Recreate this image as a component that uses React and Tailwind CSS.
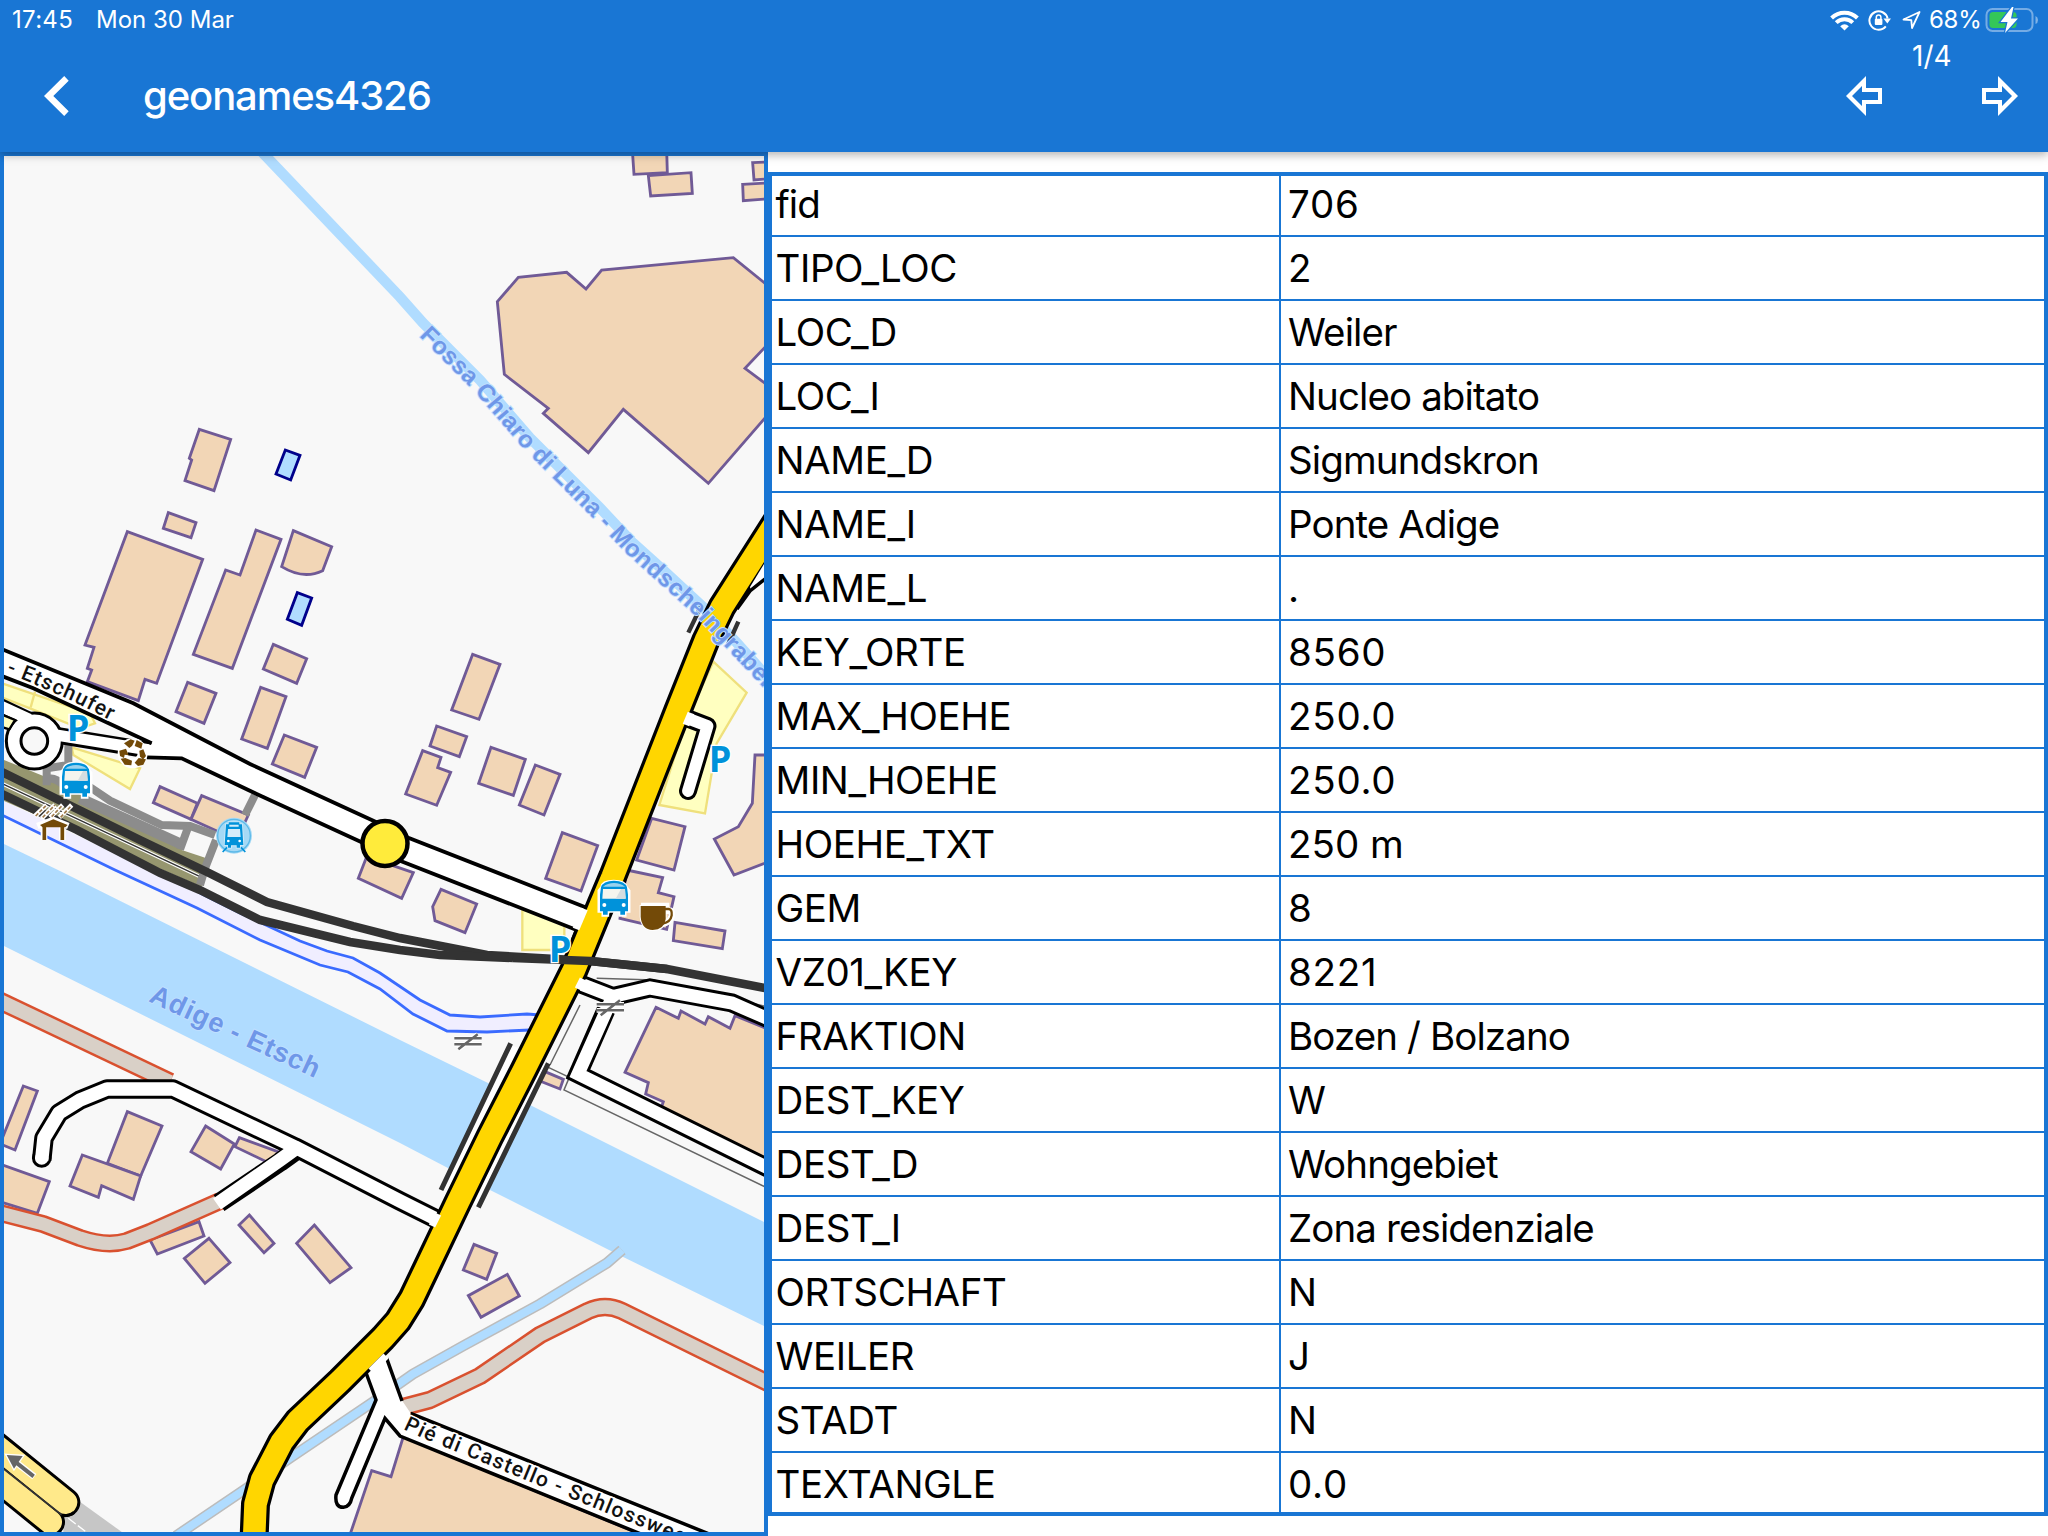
import React from "react";

const ROWS = [
  ["fid", "706"],
  ["TIPO_LOC", "2"],
  ["LOC_D", "Weiler"],
  ["LOC_I", "Nucleo abitato"],
  ["NAME_D", "Sigmundskron"],
  ["NAME_I", "Ponte Adige"],
  ["NAME_L", "."],
  ["KEY_ORTE", "8560"],
  ["MAX_HOEHE", "250.0"],
  ["MIN_HOEHE", "250.0"],
  ["HOEHE_TXT", "250 m"],
  ["GEM", "8"],
  ["VZ01_KEY", "8221"],
  ["FRAKTION", "Bozen / Bolzano"],
  ["DEST_KEY", "W"],
  ["DEST_D", "Wohngebiet"],
  ["DEST_I", "Zona residenziale"],
  ["ORTSCHAFT", "N"],
  ["WEILER", "J"],
  ["STADT", "N"],
  ["TEXTANGLE", "0.0"],
];

/* Map tiles: geometry is given in thirds of a pixel relative to each tile's origin. */
const TILES = {
  nw: "translate(0 150) scale(.33333)",
  ne: "translate(380 150) scale(.33333)",
  w: "translate(0 510) scale(.33333)",
  e: "translate(380 510) scale(.33333)",
  sw: "translate(0 870) scale(.33333)",
  se: "translate(380 870) scale(.33333)",
  bw: "translate(0 1200) scale(.33333)",
  be: "translate(380 1200) scale(.33333)",
};

const BUILDINGS = {
  nw: [
    "M598 838L692 868L642 1022L555 992L575 930L568 925Z",
    "M505 1088L588 1118L573 1163L490 1135Z",
  ],
  ne: [
    "M352 455L415 382L560 367L618 417L665 360L1060 323L1180 420V565L1095 655L1180 718V775L985 1000L730 778L625 908L490 790L505 775L373 673Z",
    "M757 0H860L862 68L762 73Z",
    "M805 77L933 68L937 130L812 138Z",
    "M1118 38L1180 35V85L1122 90Z",
    "M1088 103L1180 98V145L1090 152Z",
  ],
  w: [
    "M382 65L608 148L470 520L435 508L415 572L262 515L275 480L262 475L282 412L255 405Z",
    "M768 60L843 88L697 475L580 433L677 180L720 195Z",
    "M880 62L995 110L968 182Q910 210 845 170Z",
    "M820 403L920 446L890 520L790 477Z",
    "M563 517L648 550L612 640L528 605Z",
    "M782 532L858 560L802 715L725 687Z",
    "M853 675L950 712L914 802L817 762Z",
    "M480 830L592 880L573 928L460 878Z",
    "M605 857L745 915L710 990L573 928Z",
    "M1100 1040L1240 1088L1205 1165L1075 1105Z",
  ],
  e: [
    "M278 433L360 463L297 628L215 600Z",
    "M170 648L260 680L238 740L150 708Z",
    "M128 722L183 742L173 773L212 787L170 886L77 852Z",
    "M333 712L436 748L400 856L296 820Z",
    "M466 765L540 793L492 915L418 885Z",
    "M547 968L653 1007L603 1143L497 1105Z",
    "M815 925L915 950L882 1080L770 1050Z",
    "M1125 735H1180V1050L1062 1095L1003 987L1075 950L1117 880Z",
    "M740 1080L848 1103L835 1148L882 1160L860 1258L720 1225Z",
  ],
  sw: [
    "M70 648L112 663L45 840L0 822Z",
    "M0 882L148 935L112 1030L0 995Z",
    "M382 725L486 768L422 918L322 880Z",
    "M247 855L422 918L400 988L305 947L295 982L210 948Z",
    "M617 768L703 822L662 897L573 845Z",
    "M718 803L860 855L830 890L705 830Z",
    "M450 1110L597 1055L612 1098L472 1152Z",
  ],
  se: [
    "M183 58L290 102L255 188L165 152L158 110Z",
    "M885 157L1035 183L1027 236L880 212Z",
    "M828 412L895 445L903 423L975 462L985 440L1050 475L1065 437L1170 480V890L845 710L850 695L797 672L805 638L735 607Z",
    "M495 605L550 628L540 657L480 633Z",
  ],
  bw: [
    "M627 115L690 188L615 250L553 175Z",
    "M748 45L822 130L792 158L717 75Z",
    "M943 75L1053 203L990 248L890 130Z",
  ],
  be: [
    "M282 133L350 160L320 238L250 210Z",
    "M382 223L418 288L303 352L265 287Z",
    "M-25 812L33 830L70 710L800 1010L-92 1010Z",
  ],
};

function Road({ d, outer, inner, edge = "#000", fill = "#fff", cap = "butt" }) {
  return (
    <g fill="none" strokeLinejoin="round" strokeLinecap={cap}>
      <path d={d} stroke={edge} strokeWidth={outer} />
      <path d={d} stroke={fill} strokeWidth={inner} />
    </g>
  );
}

function Bus() {
  return (
    <g>
      <path d="M6 20Q8 2 42 2T80 20L88 30V92H76V104H62V92H24V104H10V92H-2V30Z" fill="#fff" stroke="#fff" strokeWidth="9" />
      <path d="M4 20Q10 0 43 0T82 20L85 42V92H76V102H62V92H24V102H10V92H1V42Z" fill="#0092da" />
      <path d="M10 18Q24 7 43 7T76 18Z" fill="#9ad2ee" />
      <path d="M10 25H76L78 54H8Z" fill="#f5f5ee" />
      <path d="M64 25H76L78 54H48Z" fill="#d5dde0" />
      <circle cx="14" cy="73" r="6" fill="#fff" />
      <circle cx="72" cy="73" r="6" fill="#fff" />
    </g>
  );
}

function Parking({ x, y }) {
  return (
    <text x={x} y={y} className="font-['Open_Sans',sans-serif] font-bold" fontSize="108" fill="#0092da" stroke="#fff" strokeWidth="8" paintOrder="stroke">
      P
    </text>
  );
}

function Gate() {
  return (
    <g fill="none">
      <path d="M0 12H82M0 30H82M12 45L70 0" stroke="#fff" strokeWidth="14" />
      <path d="M0 12H82M0 30H82M12 45L70 0" stroke="#666" strokeWidth="7.500" />
    </g>
  );
}

const MAIN_ROAD =
  "M790 500L764 541L722 607L706 640L678 710L612.500 877L600.700 905L574 970L524 1070L489.700 1137L458 1202L427 1267L411.700 1299L398 1321L383 1338L340 1381L297.700 1421L281.700 1442L262 1480L255.500 1504L254 1540";

function MapView() {
  return (
    <svg className="block h-full w-full" viewBox="4 156 760 1376">
      <rect x="4" y="156" width="760" height="1376" fill="#f8f8f8" />

      <path d="M4 844L58 870L400 1040L488 1083L530 1105L764 1222V1326L613 1252L490 1190L400 1143L4 946Z" fill="#b0dcff" />
      <path d="M260 150L400 297L423 323L480 380L530 438L600 508L633 543L663 570L703 607L737 643L770 680" fill="none" stroke="#b0dcff" strokeWidth="10.500" />
      <Road d="M622 1250L607 1263L540 1304L463 1346L413 1374L373 1402L290 1458L247 1488L176 1536" outer={11} inner={8} edge="#bcbcbc" fill="#b0dcff" />

      <path d="M4 801L240 913L327 951L353 958L380 973L420 1000L450 1015L480 1017L527 1014L540 1015L527 1030L487 1032L447 1031L413 1014L400 1003L380 990L348 972L320 965L260 940L197 908L4 816Z" fill="#f0eeff" />
      <path d="M200 893L240 913L300 941L327 951L353 958L380 973L420 1000L450 1015L480 1017L527 1014L540 1015" fill="none" stroke="#3a6bff" strokeWidth="2.800" />
      <path d="M0 814L115 870L197 908L260 940L320 965L348 972L380 989L413 1014L447 1031L487 1032L530 1030" fill="none" stroke="#3a6bff" strokeWidth="2.800" />

      {/* Parking areas */}
      <g fill="#ffffc0" stroke="#efe07c" strokeWidth="7">
        <path transform={TILES.e} d="M1000 455L1100 548L1010 700L975 910L838 885L915 640Z" />
        <path transform={TILES.se} d="M427 120H553V240H427Z" />
        <g transform={TILES.w}>
          <path d="M215 712L420 775L390 837L220 735Z" />
          <path d="M0 518L270 610L285 640L240 655L90 595L0 560Z" />
          <path d="M105 545L92 592" />
        </g>
      </g>

      {Object.entries(BUILDINGS).map(([tile, shapes]) => (
        <g key={tile} transform={TILES[tile]} fill="#f2d6b6" stroke="#705a96" strokeWidth="8.500">
          {shapes.map((d) => (
            <path key={d} d={d} />
          ))}
        </g>
      ))}
      <g fill="#b0dcff" stroke="#00008b" strokeWidth="8.500">
        <path transform={TILES.nw} d="M856 900L900 916L872 990L828 972Z" />
        <path transform={TILES.w} d="M892 248L935 264L905 346L862 328Z" />
      </g>

      {/* Thin boundary lines */}
      <g transform={TILES.se} fill="none" stroke="#666" strokeWidth="4.500">
        <path d="M600 405L510 585M505 592L568 622L552 660L1160 953M650 325L820 330L1160 410" />
      </g>

      {/* Station platforms */}
      <g transform={TILES.w} fill="none">
        <path d="M0 745L130 798L620 1045L605 1130L0 868Z" fill="#96966f" />
        <path d="M0 818L605 1102" stroke="#fff" strokeWidth="11" />
        <path d="M0 818L605 1102" stroke="#333" strokeWidth="4" />
        <path d="M565 965L545 1020L620 1045L640 990Z" fill="#f8f8f8" />
        <g stroke="#8c8c8c" strokeWidth="24">
          <path d="M205 700V765L140 775V826M200 835Q170 800 140 806" />
          <path d="M265 828L330 872L485 945L570 948L645 975" />
          <path d="M765 855L735 915M648 990L615 1075L600 1125M565 950L540 1018" />
          <path d="M240 865L400 937L545 1003" strokeWidth="32" />
        </g>
      </g>
      <g fill="none" stroke="#333" strokeWidth="8.500">
        <path d="M0 771L67 804L140 840L207 872L267 902L353 926L400 938L487 955L590 961L667 969L770 989" />
        <path d="M0 793L77 830L160 873L200 890L260 920L350 942L400 950L440 955L513 958" />
      </g>

      {/* Minor roads */}
      <Road d="M0 1001L170 1082" outer={19} inner={14} edge="#d9512f" fill="#d9d0c7" />
      <Road d="M0 1213L43 1224L80 1238Q107 1247 127 1241L150 1232L220 1201" outer={18} inner={13} edge="#d9512f" fill="#d9d0c7" />
      <Road d="M396 1409L430 1400L480 1376L540 1335L588 1311Q605 1303 622 1311L770 1384" outer={18.500} inner={13.500} edge="#d9512f" fill="#d9d0c7" />
      <g fill="none" strokeLinejoin="round">
        <path d="M41.700 1160L44 1138L59 1113L80 1100L107 1089H173L295 1147L400 1201L438 1220" stroke="#000" strokeWidth="19.500" />
        <path d="M41.700 1158v.1" stroke="#000" strokeWidth="19.500" strokeLinecap="round" />
        <path d="M298 1149L280 1162L219 1203" stroke="#000" strokeWidth="19.500" />
        <path d="M41.700 1160L44 1138L59 1113L80 1100L107 1089H173L295 1147L400 1201L438 1220" stroke="#fff" strokeWidth="13.500" />
        <path d="M41.700 1158v.1" stroke="#fff" strokeWidth="13.500" strokeLinecap="round" />
        <path d="M298 1147L280 1160L217 1204" stroke="#fff" strokeWidth="13.500" />
      </g>
      <g fill="none" strokeLinejoin="miter">
        <path d="M573 981L613 996.500L650 988L732 1003L780 1024" stroke="#000" strokeWidth="19" />
        <path d="M606 1010L578 1074L780 1174" stroke="#000" strokeWidth="19" />
        <path d="M573 981L613 996.500L650 988L732 1003L780 1024" stroke="#fff" strokeWidth="13" />
        <path d="M612 998L578 1074L780 1174" stroke="#fff" strokeWidth="13" />
      </g>
      <Road d="M684 717L707.500 726L688 791" outer={18} inner={11.800} cap="round" />

      {/* Etschufer road and roundabout */}
      <g transform={TILES.w} fill="none">
        <path d="M85 630L0 590" stroke="#000" strokeWidth="52" />
        <circle cx="103" cy="693" r="62" stroke="#000" strokeWidth="53" />
        <path d="M170 676L455 722" stroke="#000" strokeWidth="50" />
        <circle cx="103" cy="693" r="62" stroke="#fff" strokeWidth="35" />
        <path d="M150 672L460 722" stroke="#fff" strokeWidth="34" />
        <path d="M88 628L0 588" stroke="#fff" strokeWidth="34" />
        <path d="M0 612L45 630L28 658L0 650Z" fill="#ffffc0" stroke="#000" strokeWidth="7" />
        <path d="M0 417L400 580L750 762L1120 932L1225 983L1750 1193L1720 1262L1200 1052L1085 997L770 852L545 745L440 742L455 700L100 535L0 496Z" fill="#fff" />
        <path d="M0 415L400 580L750 762L1120 932L1225 983L1760 1193" stroke="#000" strokeWidth="11.500" />
        <path d="M0 496L100 535L455 700M440 742L545 745L770 852L1085 997L1200 1052L1730 1260L1718 1290" stroke="#000" strokeWidth="11.500" />
      </g>

      {/* Schlossweg */}
      <g transform={TILES.be}>
        <path
          d="M-50 500L-12 600L-132 885Q-136 922-110 922Q-90 920-85 895L15 655L60 708L790 1005H990L92 640L65 600L20 475L-10 430Z"
          fill="#fff"
        />
        <path
          d="M-45 510L-12 600L-132 885Q-136 922-110 922Q-90 920-85 895L15 655L60 708L790 1005M990 1003L92 640M66 603L20 475"
          fill="none"
          stroke="#000"
          strokeWidth="10.500"
        />
      </g>

      {/* Main road with its bridges */}
      <g transform={TILES.se} fill="none" strokeWidth="15">
        <path d="M405 530L200 958M490 585L285 1005" stroke="#fff" strokeWidth="20" />
        <path d="M392 520L183 960M505 580L295 1012" stroke="#333" />
      </g>
      <g transform={TILES.e} fill="none" stroke="#333" strokeWidth="13">
        <path d="M965 285L925 368M1075 335L1045 402" />
      </g>
      <path d={MAIN_ROAD} fill="none" stroke="#000" strokeWidth="29" strokeLinejoin="round" />
      <path d={MAIN_ROAD} fill="none" stroke="#ffd600" strokeWidth="22.500" strokeLinejoin="round" />
      <path d="M772 551L750 587L751 591L772 578Z" fill="#fff" />
      <path d="M770 575L750 591L737 609" fill="none" stroke="#000" strokeWidth="3.500" />
      {/* Junction openings */}
      <g fill="none" stroke="#fff" strokeWidth="7">
        <path d="M584.500 909L576 929" />
        <path d="M583 979L578 989" />
        <path d="M438 1214L432 1226" />
        <path d="M691 713L686 725" />
        <path d="M386 1356L371 1371" />
      </g>
      <path d="M513 958L590 961L667 969" fill="none" stroke="#333" strokeWidth="8.500" />

      {/* Motorway */}
      <g transform={TILES.bw} fill="none">
        <path d="M225 895L385 1010H190V950Z" fill="#c6c6c6" />
        <path d="M205 955L270 1005" stroke="#fff" strokeWidth="4" strokeDasharray="28 8" />
        <g strokeLinecap="round">
          <path d="M-60 795L151 966M-60 699L197 907" stroke="#000" strokeWidth="88" />
          <path d="M-60 795L151 966M-60 699L197 907" stroke="#ffe98a" strokeWidth="70" />
        </g>
        <path d="M0 798L185 945" stroke="#333" strokeWidth="5" />
        <path d="M185 947Q210 948 222 937" stroke="#000" strokeWidth="9" />
        <g>
          <path d="M103 830L45 785" stroke="#fff" strokeWidth="20" />
          <path d="M20 765L68 768L42 806Z" fill="#666" stroke="#fff" strokeWidth="8" paintOrder="stroke" />
          <path d="M101 829L45 785" stroke="#666" strokeWidth="12" />
        </g>
      </g>

      {/* Labels */}
      <defs>
        <path id="creek" d="M419 336L474 391L524 449L592 517L625 552L657 581L697 617L731 653L790 716" />
        <path id="river" d="M148 1001L230 1039L330 1085" />
        <path id="upper-street" d="M-8 667L27 681L70 700L116 723" />
        <path id="lower-street" d="M403 1429L420 1437L720 1559" />
      </defs>
      <g className="font-['Liberation_Sans',sans-serif] font-bold" fill="#6f97e8" stroke="#bfdfff" strokeWidth="2" paintOrder="stroke">
        <text fontSize="24">
          <textPath href="#creek" textLength="501">Fossa Chiaro di Luna - Mondscheingraben</textPath>
        </text>
        <text fontSize="27">
          <textPath href="#river" textLength="184">Adige - Etsch</textPath>
        </text>
      </g>
      <g className="font-['Roboto',sans-serif] font-medium" fill="#111" stroke="#fff" strokeWidth="3" paintOrder="stroke" fontSize="21">
        <text>
          <textPath href="#upper-street" textLength="130">r - Etschufer</textPath>
        </text>
        <text>
          <textPath href="#lower-street" textLength="303">Pié di Castello - Schlossweg</textPath>
        </text>
      </g>

      {/* Points of interest */}
      <g transform={TILES.w}>
        <Parking x="200" y="692" />
        <g transform="translate(185 758)">
          <Bus />
        </g>
        <circle cx="398" cy="730" r="30" fill="none" stroke="#fff" strokeWidth="30" />
        <g fill="#734a08">
          <path d="M372 700L392 688L404 692L396 708L388 714ZM410 690L428 700L424 716L404 708Z" />
          <path d="M358 722L378 716L386 736L374 734L372 744L360 738ZM362 746L376 744L396 752L394 766L374 764Z" />
          <path d="M418 722L430 718L438 738L430 748L420 740ZM404 758L416 744L438 748L430 764L414 768Z" />
        </g>
        <g fill="none">
          <path d="M112 948L160 930L205 948M132 945V990M187 945V990" stroke="#fff" strokeWidth="20" />
          <path d="M105 918L140 885M125 925L165 885M150 922L188 885M178 922L215 885" stroke="#fff" strokeWidth="14" />
          <path d="M107 918L140 885M128 922L165 885M155 920L188 885M182 922L213 888" stroke="#a07b4b" strokeWidth="5" strokeDasharray="11 5" />
          <path d="M120 945L160 928L203 945L196 952H128Z" fill="#734a08" />
          <path d="M133 945V990M187 945V990" stroke="#734a08" strokeWidth="11" />
        </g>
        <circle cx="702" cy="977" r="54" fill="#a5d9f5" />
        <circle cx="702" cy="977" r="49" fill="none" stroke="#5cb9e8" strokeWidth="4" />
        <path d="M686 937H718V943H726L730 1005H720V1013H710V1006H693V1013H684V1005H674L678 943H686Z" fill="#0092da" stroke="#d4edfa" strokeWidth="5" paintOrder="stroke" />
        <path d="M688 944H716V950H688ZM684 957H720L722 981H682Z" fill="#d4edfa" />
        <circle cx="685" cy="993" r="4" fill="#fff" />
        <circle cx="719" cy="993" r="4" fill="#fff" />
        <path d="M681 1012L668 1026M723 1012L736 1026" stroke="#0092da" strokeWidth="5" />
      </g>
      <g transform={TILES.e}>
        <Parking x="986" y="787" />
      </g>
      <g transform={TILES.se}>
        <Parking x="506" y="277" />
        <g transform="translate(659 32)">
          <Bus />
        </g>
        <g>
          <path d="M783 108H858V122H868Q877 122 875 138Q870 158 846 161" fill="none" stroke="#fff" strokeWidth="20" />
          <path d="M782 108H857V148Q852 180 818 180Q785 178 782 140Z" fill="#734a08" stroke="#fff" strokeWidth="6" paintOrder="stroke" />
          <path d="M855 117H866Q877 118 875 136Q872 156 848 161" fill="none" stroke="#734a08" strokeWidth="7" />
        </g>
        <g transform="translate(650 391)">
          <Gate />
        </g>
        <g transform="translate(223 493)">
          <Gate />
        </g>
      </g>
      <circle cx="385" cy="843.500" r="22.500" fill="#ffeb3b" stroke="#000" strokeWidth="4.500" />
    </svg>
  );
}

function StatusIcons() {
  return (
    <>
      <svg className="mr-[9px] h-[22px] w-[29px]" viewBox="0 0 29 22" fill="none" stroke="#fff" strokeWidth="4">
        <path d="M1.600 9A18.500 18.500 0 0 1 27.400 9" />
        <path d="M6.200 13.600A12 12 0 0 1 22.800 13.600" />
        <path d="M10.200 17.200Q14.500 13.200 18.800 17.200L14.500 21.500Z" fill="#fff" stroke="none" />
      </svg>
      <svg className="mr-[11px] h-[22px] w-[23px]" viewBox="0 0 23 22" fill="none">
        <path d="M17.800 17.300A9.200 9.200 0 1 1 19.600 9.500" stroke="#fff" strokeWidth="2" />
        <path d="M15.500 9.500H23L19.300 14.500Z" fill="#fff" />
        <rect x="6.800" y="9.800" width="7.600" height="6.200" rx="1" fill="#fff" />
        <path d="M8.300 10V8.300A2.300 2.300 0 0 1 12.900 8.300V10" stroke="#fff" strokeWidth="1.500" />
      </svg>
      <svg className="mr-[8px] h-[20px] w-[19px]" viewBox="0 0 19 20" fill="none" stroke="#fff" strokeWidth="1.800" strokeLinejoin="round">
        <path d="M1.500 9.500L17.500 2L10 18L9.300 10.200Z" />
      </svg>
    </>
  );
}

function Battery() {
  return (
    <svg className="h-[26px] w-[54px]" viewBox="0 0 54 26" fill="none">
      <rect x="1.500" y="2" width="46" height="22" rx="6" stroke="#fff" strokeOpacity=".4" strokeWidth="2" />
      <path d="M50.500 9Q53 10 53 13T50.500 17Z" fill="#fff" fillOpacity=".45" />
      <rect x="4.500" y="5" width="27" height="16" rx="3.500" fill="#34c759" />
      <path d="M27 0L15.500 15H22.500L20 26L33 11.500H26L28.500 0Z" fill="#fff" stroke="#1a76d4" strokeWidth="2.500" paintOrder="stroke" />
    </svg>
  );
}

function OutlinedArrow({ className = "" }) {
  return (
    <svg className={`h-10 w-9 ${className}`} viewBox="0 0 36 40">
      <path fillRule="evenodd" d="M0 20L20 0V12H36V28H20V40ZM6 20L16 30V24H32V16H16V10Z" fill="#fff" />
    </svg>
  );
}

function Header() {
  return (
    <header className="relative z-10 h-[152px] bg-[#1976d4] text-white shadow-[0_2px_8px_rgba(0,0,0,0.2),0_4px_10px_rgba(0,0,0,0.13)]">
      <div className="flex h-10 items-center pl-3 pr-[9px] text-[24px] leading-[40px]">
        <span className="w-[84px] tracking-[0.3px]">17:45</span>
        <span className="tracking-[0px]">Mon 30 Mar</span>
        <div className="ml-auto flex items-center">
          <StatusIcons />
          <span className="mr-[4px] w-[52px] tracking-[-0.3px]">68%</span>
          <Battery />
        </div>
      </div>
      <nav className="flex h-[112px] items-start pl-11 pr-[30px]">
        <svg className="mt-9 h-10 w-[25px]" viewBox="0 0 25 40">
          <path d="M20.200 0L24.700 4.700L9.300 20L24.700 35.300L20.200 40L0 20Z" fill="#fff" />
        </svg>
        <h1 className="ml-[74px] mt-7 text-[40px] font-medium leading-[56px] tracking-[-1.1px]">geonames4326</h1>
        <div className="ml-auto flex items-start">
          <OutlinedArrow className="mt-9" />
          <span className="w-[100px] pl-[30px] text-[28px] leading-[33px]">1/4</span>
          <OutlinedArrow className="mt-9 -scale-x-100" />
        </div>
      </nav>
    </header>
  );
}

function valueTracking(value) {
  if (/^[\d.]+$/.test(value)) return "tracking-[0.75px]";
  if (/\d/.test(value)) return "tracking-[0px]";
  return "tracking-[-0.9px]";
}

function AttributeTable() {
  return (
    <div className="mt-5 h-[1344px] w-[1280px] border-4 border-[#1976d4] bg-white text-[38.5px] text-black">
      {ROWS.map(([name, value], i) => {
        const first = i === 0;
        const last = i === ROWS.length - 1;
        return (
          <div
            key={name}
            className={`flex border-[#1976d4] ${first ? "h-[61px] leading-[56px]" : last ? "h-[59px] leading-[62px]" : "h-[64px] leading-[62px]"} ${last ? "" : "border-b-2"}`}
          >
            <div className={`w-[509px] border-r-2 border-[#1976d4] pl-[3.5px] ${first ? "tracking-[-0.9px]" : "tracking-[-0.4px]"}`}>{name}</div>
            <div className={`pl-[7px] ${valueTracking(value)}`}>{value}</div>
          </div>
        );
      })}
    </div>
  );
}

export default function App() {
  return (
    <div className="h-[1536px] w-[2048px] overflow-hidden bg-white font-['Inter',sans-serif]">
      <Header />
      <main className="flex">
        <section className="h-[1384px] w-[768px] shrink-0 border-4 border-[#1976d4]">
          <MapView />
        </section>
        <AttributeTable />
      </main>
    </div>
  );
}
